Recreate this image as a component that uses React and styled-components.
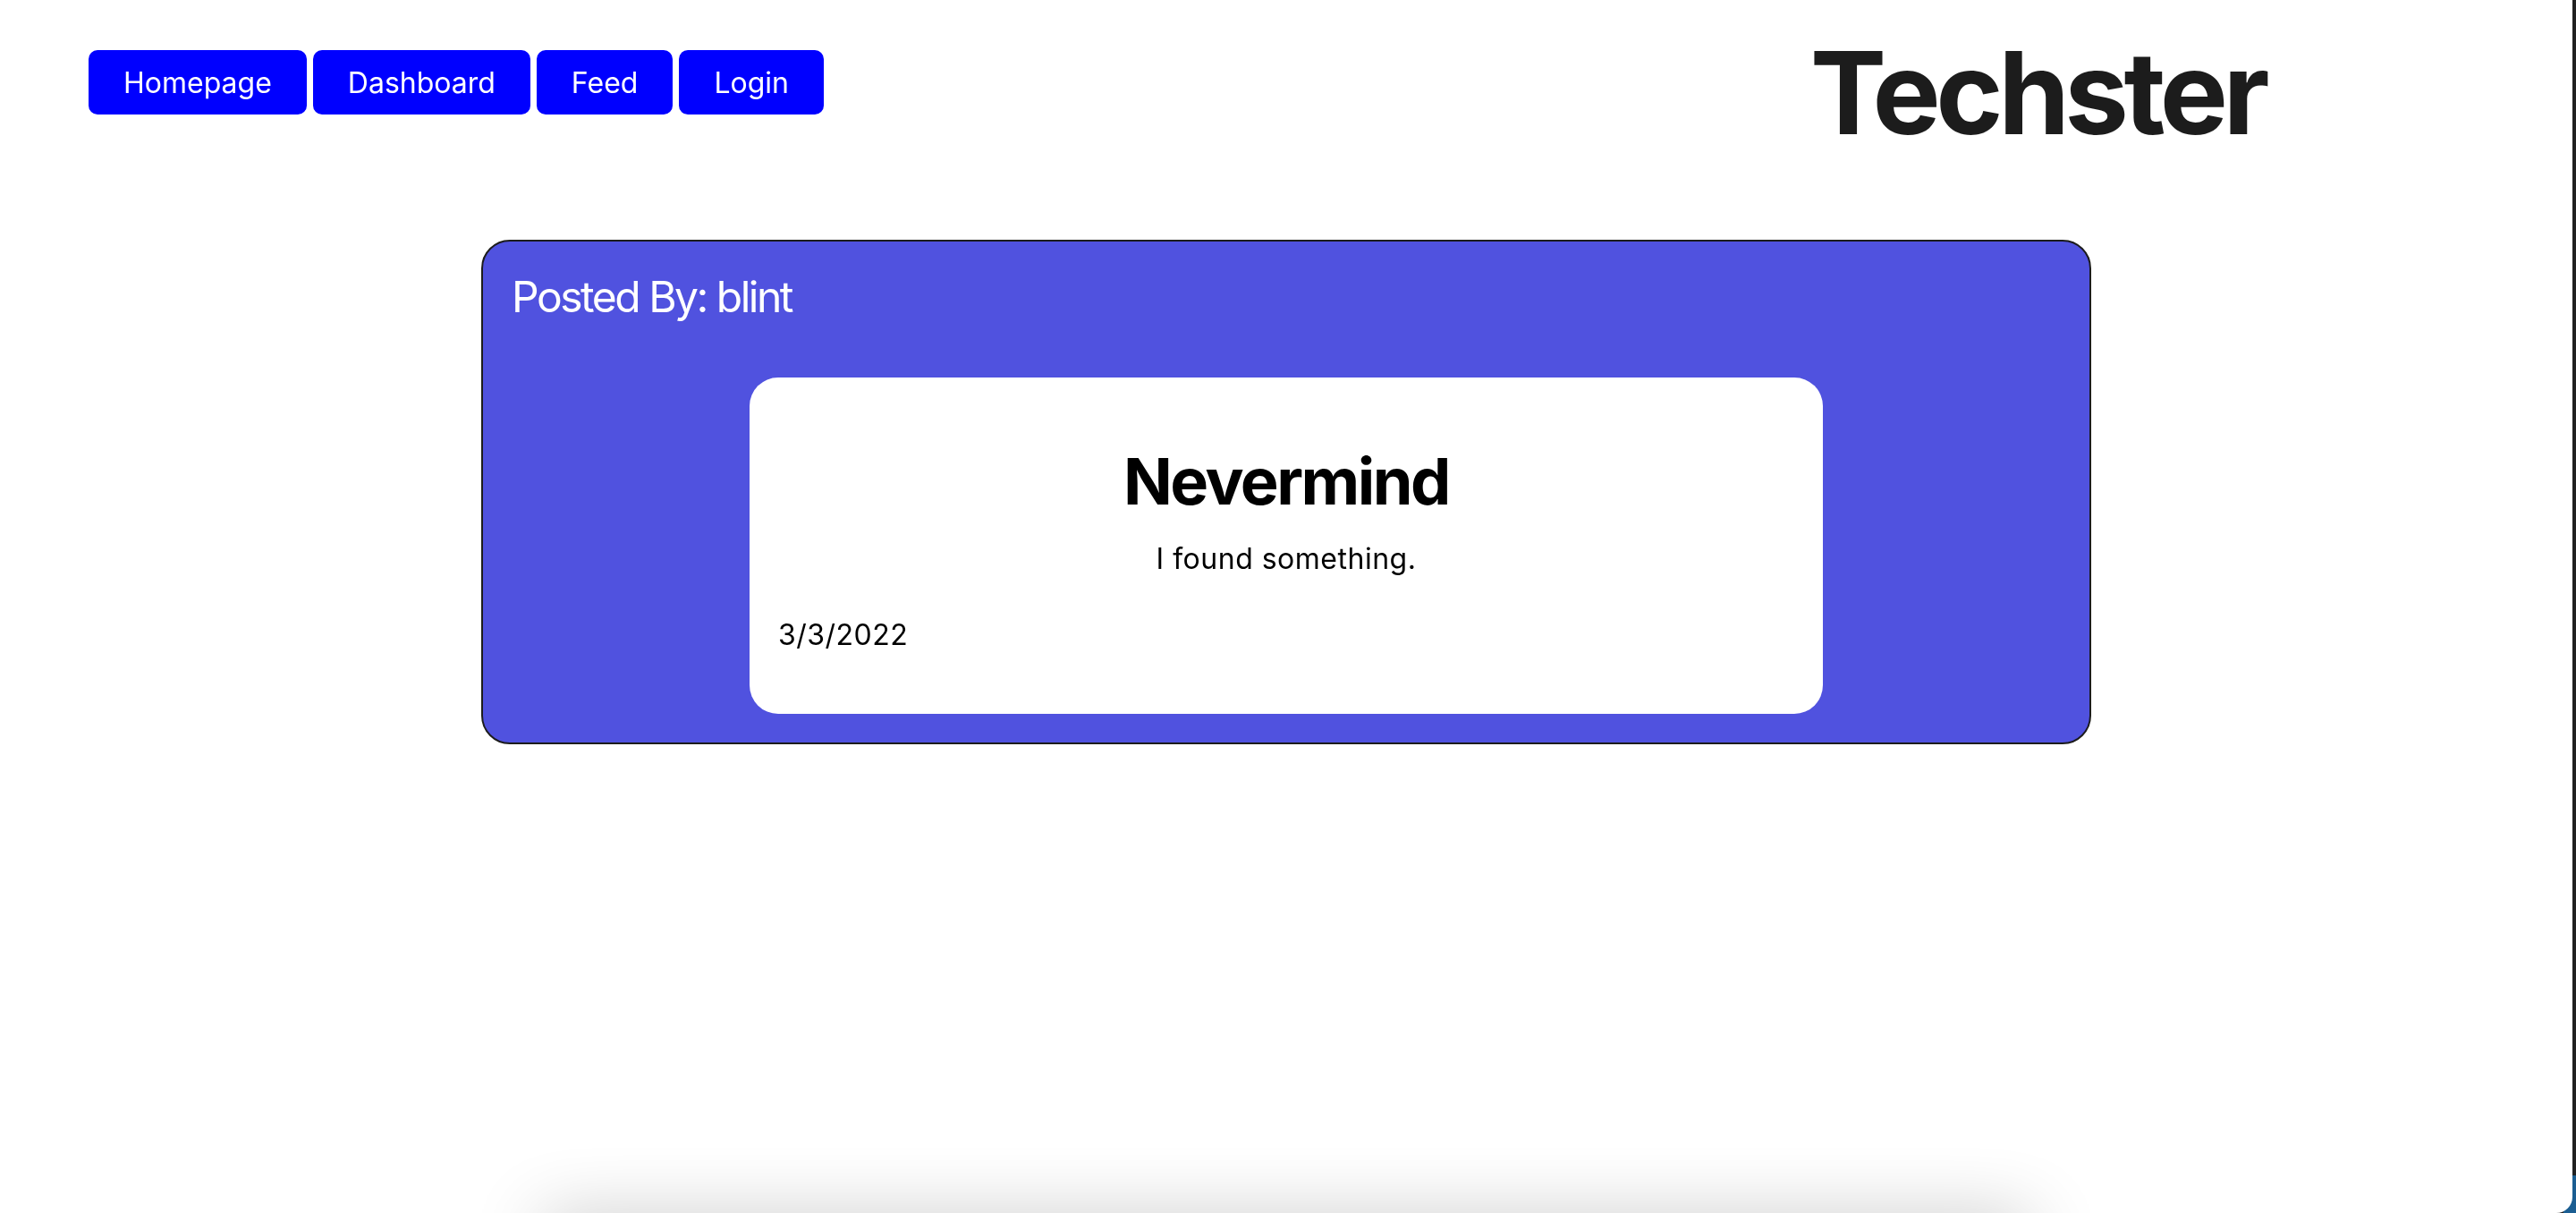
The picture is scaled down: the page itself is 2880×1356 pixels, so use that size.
import React from "react";
import styled, { createGlobalStyle } from "styled-components";

const GlobalStyle = createGlobalStyle`
	html,
	body {
		margin: 0;
		padding: 0;
		background: #222222;
		font-family: Inter, "Liberation Sans", Arial, sans-serif;
	}
`;

const DesktopCorner = styled.div`
	position: fixed;
	right: 0;
	bottom: 0;
	width: 14px;
	height: 42px;
	background: #1b5e92;
`;

const Frame = styled.div`
	position: relative;
	z-index: 1;
	display: flex;
	flex-direction: column;
	width: calc(100% - 4px);
	height: 100vh;
	overflow: hidden;
	background: #ffffff;
	border-bottom-right-radius: 18px;
`;

const Header = styled.header`
	display: flex;
	justify-content: space-between;
	align-items: flex-start;
	padding: 26px 344px 0 99px;
`;

const Nav = styled.nav`
	display: flex;
	gap: 7px;
	margin-top: 30px;
`;

const NavButton = styled.button`
	height: 72px;
	padding: 0 39px;
	border: none;
	border-radius: 10px;
	background: #0000ff;
	color: #ffffff;
	font-family: inherit;
	font-size: 32px;
	cursor: pointer;
`;

const Brand = styled.h1`
	margin: 0;
	color: #1c1c1c;
	font-size: 128px;
	font-weight: 700;
	letter-spacing: -5.5px;
`;

const Main = styled.main`
	display: flex;
	justify-content: center;
	padding-top: 87px;
`;

const PostCard = styled.section`
	width: 1800px;
	box-sizing: border-box;
	padding: 32px;
	background: #5052df;
	border: 2px solid #1c1c1c;
	border-radius: 32px;
`;

const Author = styled.h3`
	margin: 0 0 61px;
	color: #ffffff;
	font-size: 48px;
	font-weight: 400;
	letter-spacing: -2.5px;
`;

const PostBody = styled.article`
	width: 1200px;
	box-sizing: border-box;
	margin: 0 auto;
	padding: 72px 32px 69px;
	background: #ffffff;
	border-radius: 32px;
`;

const PostTitle = styled.h2`
	margin: 0;
	text-align: center;
	color: #000000;
	font-size: 72px;
	font-weight: 700;
	letter-spacing: -2.5px;
`;

const PostText = styled.p`
	margin: ${(p) => p.$gap}px 0 0;
	text-align: ${(p) => (p.$center ? "center" : "left")};
	color: #000000;
	font-size: 32px;
	letter-spacing: 0.5px;
`;

const ShadowedFooter = styled.footer`
	align-self: center;
	flex-shrink: 0;
	width: 1660px;
	height: 40px;
	margin-top: auto;
	margin-bottom: -50px;
	background: #ffffff;
	box-shadow: 0 0 80px rgba(0, 0, 0, 0.3);
`;

const links = ["Homepage", "Dashboard", "Feed", "Login"];

const App = () => {
	return (
		<>
			<GlobalStyle />
			<DesktopCorner />
			<Frame>
				<Header>
					<Nav>
						{links.map((label) => (
							<NavButton key={label}>{label}</NavButton>
						))}
					</Nav>
					<Brand>Techster</Brand>
				</Header>

				<Main>
					<PostCard>
						<Author>Posted By: blint</Author>
						<PostBody>
							<PostTitle>Nevermind</PostTitle>
							<PostText $center $gap={24}>
								I found something.
							</PostText>
							<PostText $gap={46}>3/3/2022</PostText>
						</PostBody>
					</PostCard>
				</Main>

				<ShadowedFooter />
			</Frame>
		</>
	);
};

export default App;
